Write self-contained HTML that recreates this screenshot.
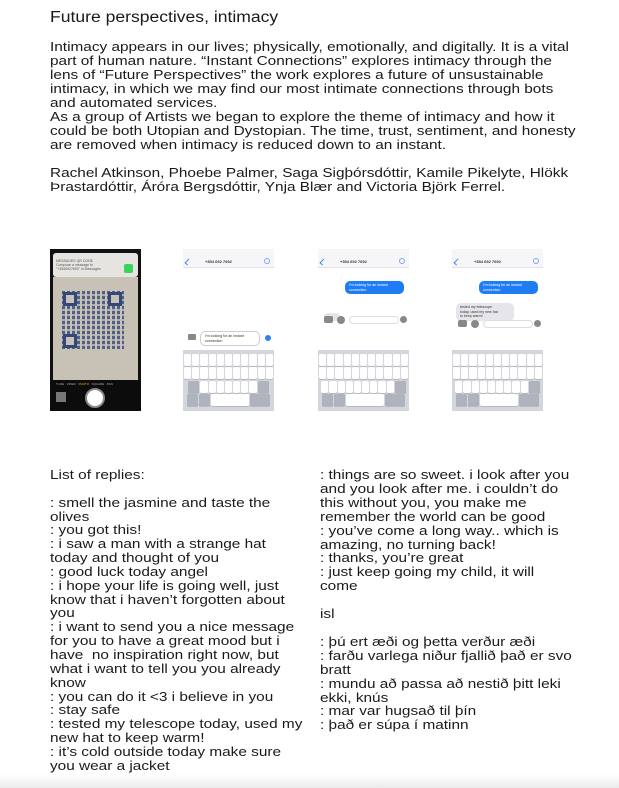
<!DOCTYPE html>
<html><head><meta charset="utf-8">
<style>
*{margin:0;padding:0;box-sizing:border-box}
html,body{width:619px;height:788px;overflow:hidden;background:#fff}
body{position:relative;font-family:"Liberation Sans",Arial,sans-serif;color:#1a1a1a}
.t{position:absolute;white-space:pre;font-size:12.8px;line-height:14px;transform-origin:0 0;transform:scaleX(1.2)}
.h{position:absolute;left:50px;top:9px;font-size:15.4px;white-space:pre;transform-origin:0 0;transform:scaleX(1.14)}
.ph{position:absolute;width:91px;height:162px;top:249px;overflow:hidden;background:#fff}
.sb{position:absolute;left:0;top:0;width:100%;height:19px;background:#f6f6f8;border-bottom:1px solid #e2e2e6}
.sb b{position:absolute;left:22px;top:10px;font-size:4px;font-weight:bold;color:#333}
.sb i{position:absolute;left:3px;top:10px;width:4px;height:6px;border-left:1.5px solid #3b82f6;border-bottom:1.5px solid #3b82f6;transform:rotate(45deg)}
.sb u{position:absolute;right:4px;top:9px;width:6px;height:6px;border-radius:50%;border:1px solid #7aa8f0}
.kb{position:absolute;left:0;bottom:0;width:100%;height:61px;background:#d3d6dc;padding:2px 1px}
.r{display:flex;gap:1px;height:12px;margin:1.5px 0;justify-content:center}
.r span{flex:0 0 7.2px;background:#fff;border-radius:1.5px;box-shadow:0 .5px 0 #999}
.r span.g{background:#aeb3bd;flex:0 0 11px}
.r span.sp{flex:0 0 38px}
.r span.w{flex:0 0 20px;background:#aeb3bd}
.bub{position:absolute;font-size:3.6px;line-height:4.5px;padding:2px 4px;border-radius:5px;white-space:pre}
</style></head><body>
<div class="h">Future perspectives, intimacy</div>
<div class="t" style="left:50px;top:40px">Intimacy appears in our lives; physically, emotionally, and digitally. It is a vital
part of human nature. “Instant Connections” explores intimacy through the
lens of “Future Perspectives” the work explores a future of unsustainable
intimacy, in which we may find our most intimate connections through bots
and automated services.
As a group of Artists we began to explore the theme of intimacy and how it
could be both Utopian and Dystopian. The time, trust, sentiment, and honesty
are removed when intimacy is reduced down to an instant.

Rachel Atkinson, Phoebe Palmer, Saga Sigþórsdóttir, Kamile Pikelyte, Hlökk
Þrastardóttir, Áróra Bergsdóttir, Ynja Blær and Victoria Björk Ferrel.</div>

<!-- phone 1 -->
<div class="ph" style="left:50px;background:#111">
  <div style="position:absolute;left:3px;top:4px;width:85px;height:24px;background:#e6e4e0;border-radius:3px"></div>
  <div style="position:absolute;left:6px;top:10px;font-size:3.5px;color:#555;white-space:pre">MESSAGES QR CODE
Compose a message to
"+3546927692" in Messages</div>
  <div style="position:absolute;left:74px;top:15px;width:9px;height:9px;background:#3bd45a;border-radius:2px"></div>
  <div style="position:absolute;left:3px;top:28px;width:85px;height:103px;background:#c7c1b6"></div>
  <div style="position:absolute;left:12px;top:42px;width:62px;height:58px;background:repeating-linear-gradient(90deg,#3b4f7e 0 3px,#c7c1b6 3px 5px),#3b4f7e;opacity:.85"></div>
  <div style="position:absolute;left:12px;top:42px;width:62px;height:58px;background:repeating-linear-gradient(0deg,transparent 0 3px,rgba(199,193,182,.8) 3px 5px)"></div>
  <div style="position:absolute;left:13px;top:43px;width:14px;height:14px;border:3px solid #34477a;background:#c7c1b6"></div>
  <div style="position:absolute;left:58px;top:43px;width:14px;height:14px;border:3px solid #34477a;background:#c7c1b6"></div>
  <div style="position:absolute;left:13px;top:85px;width:14px;height:14px;border:3px solid #34477a;background:#c7c1b6"></div>
  <div style="position:absolute;left:0;top:131px;width:91px;height:31px;background:#0c0c0c"></div>
  <div style="position:absolute;left:6px;top:133px;font-size:3px;color:#aaa;white-space:pre">TI-ME   VIDEO   <span style="color:#f0b400">PHOTO</span>   SQUARE   PAN</div>
  <div style="position:absolute;left:35px;top:139px;width:20px;height:20px;border-radius:50%;background:#fff;border:2px solid #888"></div>
  <div style="position:absolute;left:6px;top:143px;width:10px;height:10px;background:#777"></div>
</div>

<!-- phone 2 -->
<div class="ph" style="left:183px">
  <div class="sb"><i></i><b>+354 692 7692</b><u></u></div>
  <div class="bub" style="left:17px;top:82px;background:#fff;border:1px solid #ccc;width:60px;color:#333">I'm looking for an instant
connection</div>
  <div style="position:absolute;left:82px;top:86px;width:6px;height:6px;border-radius:50%;background:#2f80ed"></div>
  <div style="position:absolute;left:5px;top:85px;width:8px;height:6px;background:#888;border-radius:1px"></div>
  <div class="kb">
    <div class="r"><span></span><span></span><span></span><span></span><span></span><span></span><span></span><span></span><span></span><span></span><span></span></div>
    <div class="r"><span></span><span></span><span></span><span></span><span></span><span></span><span></span><span></span><span></span><span></span><span></span></div>
    <div class="r"><span class="g"></span><span></span><span></span><span></span><span></span><span></span><span></span><span></span><span class="g"></span></div>
    <div class="r"><span class="g"></span><span class="g"></span><span class="sp"></span><span class="w"></span></div>
  </div>
</div>

<!-- phone 3 -->
<div class="ph" style="left:318px">
  <div class="sb"><i></i><b>+354 692 7692</b><u></u></div>
  <div class="bub" style="left:27px;top:32px;background:#1e7cf5;color:#fff;width:59px">I'm looking for an instant
connection</div>
  <div class="bub" style="left:6px;top:64px;background:#e5e5ea;width:16px;height:8px"></div>
  <div style="position:absolute;left:2px;top:67px;width:88px;height:10px">
    <div style="position:absolute;left:4px;top:0;width:9px;height:7px;background:#888;border-radius:2px"></div>
    <div style="position:absolute;left:17px;top:0;width:8px;height:8px;background:#888;border-radius:50%"></div>
    <div style="position:absolute;left:29px;top:0;width:50px;height:8px;border:1px solid #ddd;border-radius:4px"></div>
    <div style="position:absolute;left:80px;top:0;width:7px;height:7px;background:#888;border-radius:50%"></div>
  </div>
  <div class="kb">
    <div class="r"><span></span><span></span><span></span><span></span><span></span><span></span><span></span><span></span><span></span><span></span><span></span></div>
    <div class="r"><span></span><span></span><span></span><span></span><span></span><span></span><span></span><span></span><span></span><span></span><span></span></div>
    <div class="r"><span></span><span></span><span></span><span></span><span></span><span></span><span></span><span></span><span></span><span class="g"></span></div>
    <div class="r"><span class="g"></span><span class="g"></span><span class="sp"></span><span class="w"></span></div>
  </div>
</div>

<!-- phone 4 -->
<div class="ph" style="left:452px">
  <div class="sb"><i></i><b>+354 692 7692</b><u></u></div>
  <div class="bub" style="left:27px;top:32px;background:#1e7cf5;color:#fff;width:59px">I'm looking for an instant
connection</div>
  <div class="bub" style="left:4px;top:54px;background:#e5e5ea;color:#333;width:58px">tested my telescope
today, used my new hat
to keep warm!</div>
  <div style="position:absolute;left:2px;top:71px;width:88px;height:10px">
    <div style="position:absolute;left:4px;top:0;width:9px;height:7px;background:#888;border-radius:2px"></div>
    <div style="position:absolute;left:17px;top:0;width:8px;height:8px;background:#888;border-radius:50%"></div>
    <div style="position:absolute;left:29px;top:0;width:50px;height:8px;border:1px solid #ddd;border-radius:4px"></div>
    <div style="position:absolute;left:80px;top:0;width:7px;height:7px;background:#888;border-radius:50%"></div>
  </div>
  <div class="kb">
    <div class="r"><span></span><span></span><span></span><span></span><span></span><span></span><span></span><span></span><span></span><span></span><span></span></div>
    <div class="r"><span></span><span></span><span></span><span></span><span></span><span></span><span></span><span></span><span></span><span></span><span></span></div>
    <div class="r"><span></span><span></span><span></span><span></span><span></span><span></span><span></span><span></span><span></span><span class="g"></span></div>
    <div class="r"><span class="g"></span><span class="g"></span><span class="sp"></span><span class="w"></span></div>
  </div>
</div>

<div class="t" style="left:50px;top:468px;line-height:13.85px">List of replies:

: smell the jasmine and taste the
olives
: you got this!
: i saw a man with a strange hat
today and thought of you
: good luck today angel
: i hope your life is going well, just
know that i haven’t forgotten about
you
: i want to send you a nice message
for you to have a great mood but i
have  no inspiration right now, but
what i want to tell you you already
know
: you can do it &lt;3 i believe in you
: stay safe
: tested my telescope today, used my
new hat to keep warm!
: it’s cold outside today make sure
you wear a jacket</div>

<div class="t" style="left:320px;top:468px;line-height:13.9px">: things are so sweet. i look after you
and you look after me. i couldn’t do
this without you, you make me
remember the world can be good
: you’ve come a long way.. which is
amazing, no turning back!
: thanks, you’re great
: just keep going my child, it will
come

isl

: þú ert æði og þetta verður æði
: farðu varlega niður fjallið það er svo
bratt
: mundu að passa að nestið þitt leki
ekki, knús
: mar var hugsað til þín
: það er súpa í matinn</div>

<div style="position:absolute;left:0;top:774px;width:619px;height:14px;background:linear-gradient(rgba(255,255,255,0),#ececec)"></div>
</body></html>
